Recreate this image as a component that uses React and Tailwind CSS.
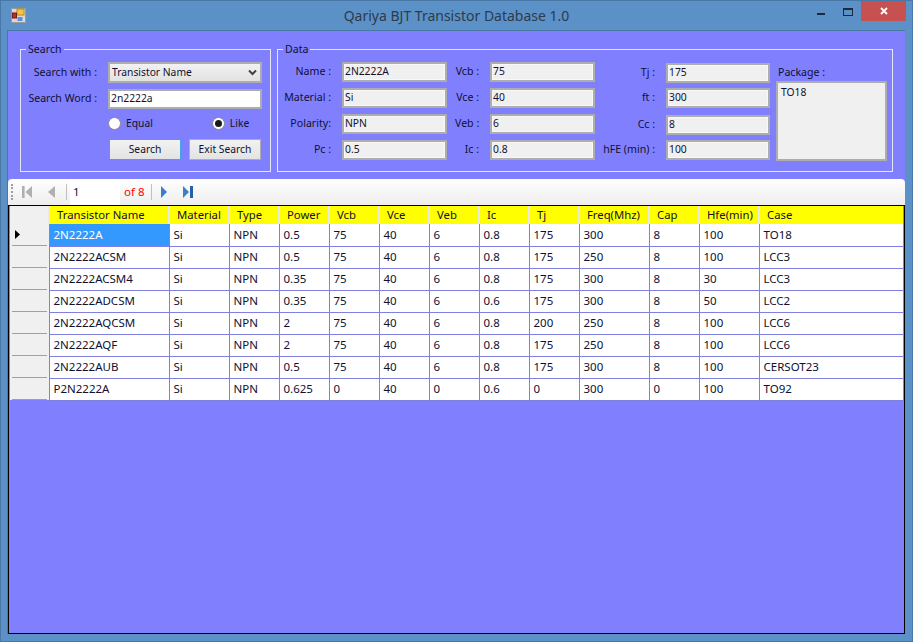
const cols = [
  { n: "Transistor Name", w: 120 },
  { n: "Material", w: 60 },
  { n: "Type", w: 50 },
  { n: "Power", w: 50 },
  { n: "Vcb", w: 50 },
  { n: "Vce", w: 50 },
  { n: "Veb", w: 50 },
  { n: "Ic", w: 50 },
  { n: "Tj", w: 50 },
  { n: "Freq(Mhz)", w: 70 },
  { n: "Cap", w: 50 },
  { n: "Hfe(min)", w: 60 },
  { n: "Case", w: 144 },
];
const rows = [
  ["2N2222A","Si","NPN","0.5","75","40","6","0.8","175","300","8","100","TO18"],
  ["2N2222ACSM","Si","NPN","0.5","75","40","6","0.8","175","250","8","100","LCC3"],
  ["2N2222ACSM4","Si","NPN","0.35","75","40","6","0.8","175","300","8","30","LCC3"],
  ["2N2222ADCSM","Si","NPN","0.35","75","40","6","0.6","175","300","8","50","LCC2"],
  ["2N2222AQCSM","Si","NPN","2","75","40","6","0.8","200","250","8","100","LCC6"],
  ["2N2222AQF","Si","NPN","2","75","40","6","0.8","175","250","8","100","LCC6"],
  ["2N2222AUB","Si","NPN","0.5","75","40","6","0.8","175","300","8","100","CERSOT23"],
  ["P2N2222A","Si","NPN","0.625","0","40","0","0.6","0","300","0","100","TO92"],
];

function Row({ label, value, lw, bw = "w-[105px]", className = "" }) {
  return (
    <div className={`flex items-center ${className}`}>
      <span className={`${lw} text-right text-[10.6px] whitespace-nowrap`}>{label}</span>
      <div className={`ml-[11px] h-[20px] ${bw} border-2 border-[#adadad] bg-[#f0f0f0] pl-[1px] leading-[15px] shadow-[inset_0_0_0_1px_#f8f8f8]`}>
        {value}
      </div>
    </div>
  );
}

function Radio({ on, label, className = "" }) {
  return (
    <div className={`flex items-center gap-[5px] ${className}`}>
      <span className="flex h-[13px] w-[13px] items-center justify-center rounded-full border border-[#8a8a8a] bg-white">
        {on && <span className="h-[7px] w-[7px] rounded-full bg-[#1a1a1a]" />}
      </span>
      <span>{label}</span>
    </div>
  );
}

function Legend({ children }) {
  return <legend className="ml-[5px] px-[2px] text-[10.6px] leading-[14px]">{children}</legend>;
}

function Nav({ children }) {
  return <svg className="block" width="14" height="14" viewBox="0 0 14 14">{children}</svg>;
}

export default function App() {
  return (
    <div
      className="flex h-[642px] w-[913px] flex-col overflow-hidden border border-[#4a78a6] bg-[#5c91c7] text-[10.3px] text-[#101030]"
      style={{ fontFamily: '"Noto Sans", "DejaVu Sans", sans-serif' }}
    >
      {/* Title bar */}
      <div className="grid h-[29px] shrink-0 grid-cols-[1fr_auto_1fr] items-start">
        <svg className="ml-[10px] mt-[7px]" width="15" height="15" viewBox="0 0 15 15">
          <rect x="0.5" y="0.5" width="14" height="14" fill="#d9d9d9" stroke="#9a9a9a" />
          <rect x="6" y="1" width="7" height="6" fill="#f5c542" stroke="#b98a1e" />
          <rect x="1.5" y="5" width="4" height="5" fill="#c8281e" stroke="#7a1a14" />
          <rect x="6.5" y="9" width="5" height="4" fill="#5b8fd6" />
        </svg>
        <div className="pt-[5px] text-center text-[14px] leading-[20px] text-[#2d3b4a]">
          Qariya BJT Transistor Database 1.0
        </div>
        <div className="mr-[6px] flex items-start justify-end">
          <div className="mr-[18px] mt-[12px] h-[2px] w-[8px] bg-[#1c2a3a]" />
          <div className="mr-[8px] mt-[7px] h-[8px] w-[10px] border border-t-2 border-[#1c2a3a]" />
          <div className="flex h-[20px] w-[45px] items-center justify-center bg-[#c75050]">
            <svg width="10" height="10" viewBox="0 0 10 10">
              <path d="M2 2 L8 8 M8 2 L2 8" stroke="#fff" strokeWidth="1.8" />
            </svg>
          </div>
        </div>
      </div>

      {/* Client area */}
      <div className="ml-[6px] mr-[7px] mb-[7px] flex min-h-0 flex-1 flex-col border-l border-t border-[#4a78a6] bg-[#8080ff]">
        {/* Group boxes */}
        <div className="flex h-[148px] shrink-0 gap-[6px] pl-[12px] pt-[11px]">
          <fieldset className="h-[130px] w-[251px] border border-[#e6e6fa]">
            <Legend>Search</Legend>
            <div className="pl-[7px] pt-[6px]">
              <div className="flex h-[21px] items-center">
                <span className="w-[69px] text-right text-[10.6px] whitespace-nowrap">Search with :</span>
                <div className="ml-[11px] flex h-[21px] w-[154px] items-center justify-between border-2 border-[#adadad] bg-gradient-to-b from-[#f2f2f2] to-[#e2e2e2] pl-[2px] pr-[3px]">
                  <span>Transistor Name</span>
                  <svg width="9" height="7" viewBox="0 0 9 7">
                    <path d="M1 1.5 L4.5 5 L8 1.5" fill="none" stroke="#444" strokeWidth="2" />
                  </svg>
                </div>
              </div>
              <div className="mt-[6px] flex h-[20px] items-center">
                <span className="w-[69px] text-right text-[10.6px] whitespace-nowrap">Search Word :</span>
                <div className="ml-[11px] h-[20px] w-[154px] border-2 border-[#adadad] bg-white pl-[1px] leading-[15px]">2n2222a</div>
              </div>
              <div className="ml-[80px] mt-[8px] flex h-[13px] items-center">
                <Radio label="Equal" />
                <Radio on label="Like" className="ml-[59px]" />
              </div>
              <div className="ml-[81px] mt-[9px] flex">
                <button className="h-[21px] w-[72px] border border-[#3fa7e8] bg-gradient-to-b from-[#f2f2f2] to-[#e3e3e3]">Search</button>
                <button className="ml-[8px] h-[21px] w-[72px] border border-[#adadad] bg-gradient-to-b from-[#f2f2f2] to-[#e3e3e3]">Exit Search</button>
              </div>
            </div>
          </fieldset>

          <fieldset className="h-[130px] w-[616px] border border-[#e6e6fa]">
            <Legend>Data</Legend>
            <div className="flex pt-[6px]">
              <div className="ml-[4px] flex flex-col gap-[6px]">
                <Row label="Name :" value="2N2222A" lw="w-[49px]" />
                <Row label="Material :" value="Si" lw="w-[49px]" />
                <Row label="Polarity:" value="NPN" lw="w-[49px]" />
                <Row label="Pc :" value="0.5" lw="w-[49px]" />
              </div>
              <div className="ml-[8px] flex flex-col gap-[6px]">
                <Row label="Vcb :" value="75" lw="w-[24px]" />
                <Row label="Vce :" value="40" lw="w-[24px]" />
                <Row label="Veb :" value="6" lw="w-[24px]" />
                <Row label="Ic :" value="0.8" lw="w-[24px]" />
              </div>
              <div className="ml-[8px] flex flex-col pt-[1px]">
                <Row label="Tj :" value="175" lw="w-[52px]" bw="w-[104px]" />
                <Row label="ft :" value="300" lw="w-[52px]" bw="w-[104px]" className="mt-[5px]" />
                <Row label="Cc :" value="8" lw="w-[52px]" bw="w-[104px]" className="mt-[7px]" />
                <Row label="hFE (min) :" value="100" lw="w-[52px]" bw="w-[104px]" className="mt-[5px]" />
              </div>
              <div className="ml-[6px] flex flex-col">
                <span className="ml-[2px] h-[19px] text-[10.6px] leading-[20px]">Package :</span>
                <div className="h-[80px] w-[111px] border-2 border-[#adadad] bg-[#f0f0f0] pl-[3px] pt-[2px]">TO18</div>
              </div>
            </div>
          </fieldset>
        </div>

        {/* Navigator */}
        <div className="flex h-[26px] shrink-0 items-center rounded-t-[4px] bg-gradient-to-b from-white to-[#eeeeee] pl-[3px] text-[11.5px]">
          <div className="h-[16px] w-[3px] border-l-2 border-dotted border-[#a0a0a0]" />
          <div className="ml-[7px]"><Nav><path d="M1 1h2.6v12H1z M11 1v12L4.5 7z" fill="#b0b0b0" /></Nav></div>
          <div className="ml-[10px]"><Nav><path d="M10 1v12L3 7z" fill="#b0b0b0" /></Nav></div>
          <div className="ml-[7px] h-[16px] w-px bg-[#c0c0c0]" />
          <div className="ml-[3px] flex h-[25px] w-[50px] items-center bg-white pl-[3px]">1</div>
          <span className="ml-[4px] w-[20px] whitespace-nowrap text-[#ff0000]">of 8</span>
          <div className="ml-[7px] h-[16px] w-px bg-[#c0c0c0]" />
          <div className="ml-[7px]"><Nav><path d="M2 1v12l6-6z" fill="#3a7ed0" /></Nav></div>
          <div className="ml-[8px]"><Nav><path d="M2 1v12l6-6z" fill="#3a7ed0" /><path d="M9 1h3v12H9z" fill="#2a5ea8" /></Nav></div>
        </div>

        {/* Grid */}
        <div className="min-h-0 flex-1 border border-black pl-px text-[11.5px]">
          <table className="table-fixed border-collapse">
            <colgroup>
              <col className="w-[39px]" />
              {cols.map((c) => <col key={c.n} style={{ width: c.w }} />)}
            </colgroup>
            <thead>
              <tr className="h-[18px]">
                <th className="bg-[#f0f0f0]" />
                {cols.map((c) => (
                  <th key={c.n} className="border-l-2 border-[#e8e8e8] bg-[#ffff00] pl-[7px] text-left text-[11.3px] font-normal leading-[16px] whitespace-nowrap">{c.n}</th>
                ))}
              </tr>
            </thead>
            <tbody>
              {rows.map((r, i) => (
                <tr key={r[0]} className="h-[22px]">
                  <td className="bg-[#f0f0f0] p-0">
                    <div className="ml-[2px] mr-[2px] flex h-[22px] items-center border-b border-[#a0a0a0] pl-[2px]">
                      {i === 0 && (
                        <svg width="7" height="11" viewBox="0 0 7 11" className="block">
                          <path d="M1 1v9l5-4.5z" fill="#000" />
                        </svg>
                      )}
                    </div>
                  </td>
                  {r.map((v, j) => (
                    <td
                      key={j}
                      className={`border-b border-l border-[#8080e0] pl-[4px] leading-[16px] whitespace-nowrap ${i === 0 && j === 0 ? "bg-[#3399ff] text-white" : "bg-white"}`}
                    >
                      {v}
                    </td>
                  ))}
                </tr>
              ))}
            </tbody>
          </table>
        </div>
      </div>
    </div>
  );
}
